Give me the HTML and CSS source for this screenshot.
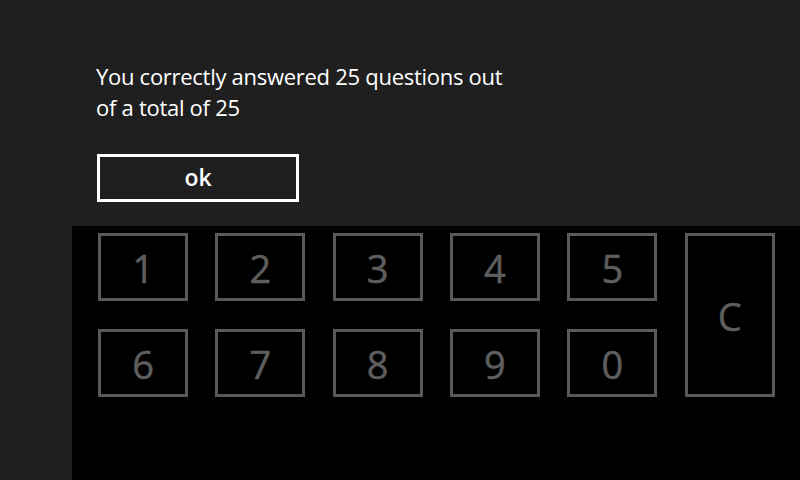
FILE: index.html
```html
<!DOCTYPE html>
<html>
<head>
<meta charset="utf-8">
<link rel="stylesheet" href="styles.css">
</head>
<body>
<div class="dialog">
  <p class="message">You correctly answered 25 questions out<br>of a total of 25</p>
  <button class="ok">ok</button>
</div>
<div class="pad">
  <div class="keys">
    <div class="key">1</div>
    <div class="key">2</div>
    <div class="key">3</div>
    <div class="key">4</div>
    <div class="key">5</div>
    <div class="key key-c">C</div>
    <div class="key">6</div>
    <div class="key">7</div>
    <div class="key">8</div>
    <div class="key">9</div>
    <div class="key">0</div>
  </div>
</div>
</body>
</html>
```
FILE: styles.css
```css
html, body {
  margin: 0;
  padding: 0;
  width: 800px;
  height: 480px;
  overflow: hidden;
  background: #1f1f1f;
  font-family: "Open Sans", "Noto Sans", sans-serif;
}
.dialog {
  height: 226px;
  box-sizing: border-box;
  padding: 61px 0 0 96px;
}
.message {
  margin: 0;
  color: #ffffff;
  font-size: 22px;
  line-height: 31px;
  letter-spacing: -0.28px;
}
.ok {
  display: block;
  margin: 31px 0 0 1px;
  width: 202px;
  height: 48px;
  box-sizing: border-box;
  border: 3px solid #ffffff;
  background: transparent;
  color: #ffffff;
  font-family: inherit;
  font-size: 23px;
  font-weight: 600;
  padding: 0 0 2px 0;
}
.pad {
  margin-left: 72px;
  height: 254px;
  background: #000000;
  box-sizing: border-box;
  padding: 7px 0 0 26px;
}
.keys {
  display: grid;
  grid-template-columns: repeat(6, 90px);
  grid-template-rows: 68px 68px;
  column-gap: 27.33px;
  row-gap: 28px;
}
.key {
  box-sizing: border-box;
  border: 3px solid #595959;
  color: #5e5e5e;
  font-size: 38px;
  display: flex;
  align-items: center;
  justify-content: center;
  padding-top: 2px;
  -webkit-text-stroke: 0.5px #5e5e5e;
}
.key-c {
  grid-column: 6;
  grid-row: 1 / span 2;
}
```
